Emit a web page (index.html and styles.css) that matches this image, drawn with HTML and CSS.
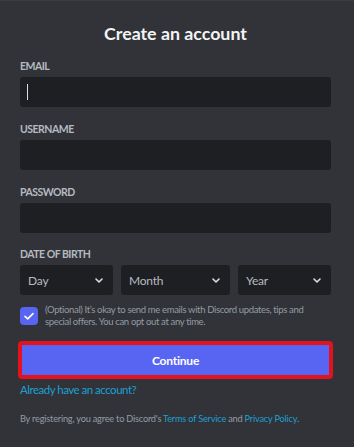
FILE: index.html
```html
<!DOCTYPE html>
<html>
<head>
<meta charset="utf-8">
<link rel="stylesheet" href="styles.css">
</head>
<body>
<div class="page">
  <h1 class="title">Create an account</h1>
  <div class="field first">
    <div class="label">Email</div>
    <div class="input"><span class="caret"></span></div>
  </div>
  <div class="field">
    <div class="label">Username</div>
    <div class="input"></div>
  </div>
  <div class="field">
    <div class="label">Password</div>
    <div class="input"></div>
  </div>
  <div class="field dob-field">
    <div class="label">Date of Birth</div>
    <div class="dob">
      <div class="select day"><span>Day</span><svg class="chev" viewBox="0 0 8 5" width="8" height="5"><path d="M1 1l3 3 3-3" fill="none" stroke="#dbdee1" stroke-width="1.6" stroke-linecap="round" stroke-linejoin="round"/></svg></div>
      <div class="select month"><span>Month</span><svg class="chev" viewBox="0 0 8 5" width="8" height="5"><path d="M1 1l3 3 3-3" fill="none" stroke="#dbdee1" stroke-width="1.6" stroke-linecap="round" stroke-linejoin="round"/></svg></div>
      <div class="select year"><span>Year</span><svg class="chev" viewBox="0 0 8 5" width="8" height="5"><path d="M1 1l3 3 3-3" fill="none" stroke="#dbdee1" stroke-width="1.6" stroke-linecap="round" stroke-linejoin="round"/></svg></div>
    </div>
  </div>
  <div class="optin">
    <div class="check"><svg viewBox="0 0 18 18" width="18" height="18"><path d="M5 9.3l2.7 2.6L13 6.6" fill="none" stroke="#ffffff" stroke-width="1.6" stroke-linecap="round" stroke-linejoin="round"/></svg></div>
    <p class="optin-text">(Optional) It’s okay to send me emails with Discord updates, tips and special offers. You can opt out at any time.</p>
  </div>
  <button class="continue">Continue</button>
  <a class="login" href="#">Already have an account?</a>
  <p class="terms">By registering, you agree to Discord's <a href="#">Terms of Service</a> and <a href="#">Privacy Policy</a>.</p>
</div>
</body>
</html>
```
FILE: styles.css
```css
html, body {
  margin: 0;
  padding: 0;
  background: #313338;
  height: 100%;
}
body {
  font-family: "Lato", "Noto Sans", sans-serif;
  border-top: 1px solid #3a3c42;
  box-sizing: border-box;
}
.page {
  width: 311px;
  padding: 0 23px 0 20px;
  display: flex;
  flex-direction: column;
}
.title {
  margin: 22px 0 0;
  font-size: 17.8px;
  line-height: 20px;
  font-weight: 700;
  color: #f2f3f5;
  text-align: center;
}
.field {
  display: flex;
  flex-direction: column;
}
.label {
  font-size: 10.5px;
  font-weight: 700;
  text-transform: uppercase;
  color: #b5bac1;
  line-height: 13px;
  letter-spacing: -0.5px;
  margin-top: 16px;
  margin-bottom: 4px;
}
.field.first .label { margin-top: 17px; }
.dob-field .label { margin-top: 15px; margin-bottom: 4px; }
.input {
  height: 30px;
  background: #1e1f22;
  border-radius: 3px;
  display: flex;
  align-items: center;
  padding-left: 7px;
}
.caret {
  width: 1px;
  height: 16px;
  background: #dbdee1;
}
.dob {
  display: flex;
  gap: 8px;
}
.select {
  height: 30px;
  background: #1e1f22;
  border-radius: 3px;
  display: flex;
  align-items: center;
  justify-content: space-between;
  padding: 0 10px 0 8px;
  box-sizing: border-box;
  font-size: 12px;
  letter-spacing: -0.2px;
  color: #b5bac1;
}
.day { width: 93px; }
.month { width: 109px; }
.year { width: 93px; }
.chev { display: block; }
.optin {
  display: flex;
  align-items: flex-start;
  gap: 7px;
  margin-top: 9px;
}
.check {
  width: 18px;
  height: 18px;
  flex: none;
  background: #5865f2;
  border-radius: 4px;
  margin-top: 3px;
}
.check svg { display: block; }
.optin-text {
  margin: 0;
  font-size: 9.5px;
  line-height: 12px;
  letter-spacing: -0.35px;
  color: #949ba4;
}
.continue {
  margin-top: 15px;
  height: 34px;
  border: none;
  border-radius: 2px;
  background: #5865f2;
  color: #ffffff;
  font-family: inherit;
  font-size: 12px;
  letter-spacing: -0.2px;
  font-weight: 700;
  outline: 4px solid #e3121c;
  outline-offset: -2px;
  padding: 0;
}
.login {
  margin-top: 5px;
  font-size: 11.5px;
  line-height: 16px;
  letter-spacing: -0.5px;
  color: #1e9fd0;
  text-decoration: none;
  align-self: flex-start;
}
.terms {
  margin: 15px 0 0;
  font-size: 9.2px;
  line-height: 12px;
  letter-spacing: -0.2px;
  color: #949ba4;
  white-space: nowrap;
}
.terms a {
  color: #1e9fd0;
  text-decoration: none;
}
```
